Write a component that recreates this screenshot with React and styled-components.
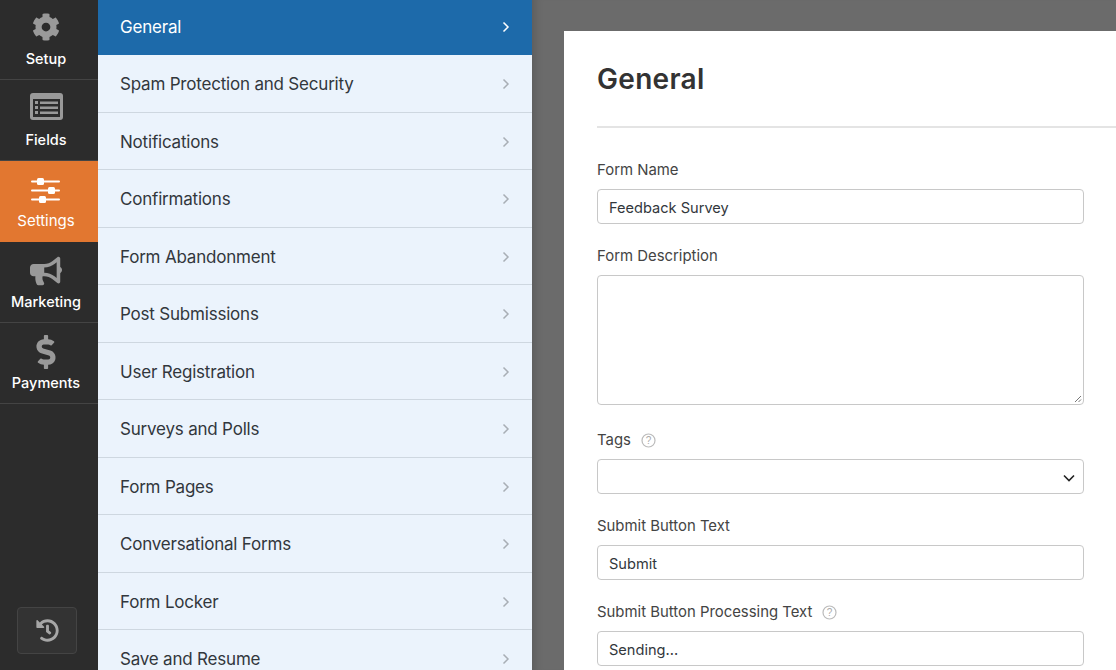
import styled, { createGlobalStyle } from 'styled-components';
import { FaCog, FaBullhorn, FaDollarSign, FaHistory } from 'react-icons/fa';

const GlobalStyle = createGlobalStyle`
  html, body {
    margin: 0;
    padding: 0;
    height: 100%;
    overflow: hidden;
    background: #6b6b6b;
  }
  * {
    box-sizing: border-box;
  }
`;

const Page = styled.div`
  display: flex;
  width: 1116px;
  height: 670px;
  overflow: hidden;
  font-family: Inter, 'Liberation Sans', Arial, sans-serif;
`;

const Sidebar = styled.nav`
  width: 98px;
  flex-shrink: 0;
  background: #2c2c2c;
  display: flex;
  flex-direction: column;
`;

const SideItem = styled.div`
  height: ${(p) => (p.$first ? '80px' : '81px')};
  display: flex;
  flex-direction: column;
  align-items: center;
  justify-content: flex-end;
  padding: 0 6px 12px 0;
  gap: 6px;
  color: #fff;
  font-size: ${(p) => (p.$active ? '15px' : '14.5px')};
  font-weight: ${(p) => (p.$active ? 400 : 500)};
  line-height: 17px;
  background: ${(p) => (p.$active ? '#e27730' : 'transparent')};
  border-bottom: 1px solid ${(p) => (p.$active ? '#e27730' : '#444')};
`;

const IconSlot = styled.div`
  height: 32px;
  display: flex;
  align-items: center;
  justify-content: center;
  margin-bottom: ${(p) => p.$lift || 0}px;
  color: ${(p) => (p.$active ? '#fff' : '#999')};
`;

const HistoryButton = styled.div`
  margin: auto 21px 16px 17px;
  height: 47px;
  border: 1px solid #444;
  border-radius: 4px;
  background: #333;
  color: #a6a6a6;
  display: flex;
  align-items: center;
  justify-content: center;
`;

const SectionList = styled.div`
  width: 434px;
  flex-shrink: 0;
  background: #ebf3fc;
`;

const SectionRow = styled.div`
  height: ${(p) => (p.$active ? '55px' : '57.5px')};
  display: flex;
  align-items: center;
  justify-content: space-between;
  padding: ${(p) => (p.$active ? 0 : '2px')} 22px 0;
  font-size: 17px;
  letter-spacing: -0.2px;
  color: ${(p) => (p.$active ? '#fff' : '#32373c')};
  background: ${(p) => (p.$active ? '#1d6aaa' : 'transparent')};
  border-bottom: 1px solid ${(p) => (p.$active ? '#1d6aaa' : '#ced7e0')};
`;

const Main = styled.main`
  flex: 1;
  min-width: 0;
  padding: 31px 0 0 32px;
  background: #6b6b6b;
  box-shadow: inset 10px 0 10px -8px rgba(0, 0, 0, 0.16);
`;

const Panel = styled.div`
  background: #fff;
  height: 100%;
  padding: 0 32px 0 33px;
`;

const Title = styled.h1`
  margin: 0 -32px 0 0;
  height: 97px;
  padding-top: 29px;
  font-size: 28px;
  line-height: 38px;
  font-weight: 600;
  letter-spacing: 0.3px;
  color: #333;
  border-bottom: 2px solid #e4e4e4;
`;

const Form = styled.div`
  display: flex;
  flex-direction: column;
  padding-top: 32px;
`;

const Field = styled.div`
  display: flex;
  flex-direction: column;
  margin-bottom: ${(p) => p.$gap || 22}px;
`;

const Label = styled.label`
  display: flex;
  align-items: center;
  gap: 10px;
  height: 20px;
  margin-bottom: 9px;
  font-size: 14.9px;
  color: #444;
`;

const Input = styled.div`
  width: 487px;
  height: ${(p) => p.$h || 35}px;
  display: flex;
  align-items: center;
  justify-content: space-between;
  position: relative;
  padding: 2px 8px 0 11px;
  border: 1px solid #c8c8c8;
  border-radius: 4px;
  font-size: 14.6px;
  color: #32373c;
  background: #fff;
`;

const Grip = styled.svg`
  position: absolute;
  right: 1px;
  bottom: 1px;
`;

const sections = [
  'General',
  'Spam Protection and Security',
  'Notifications',
  'Confirmations',
  'Form Abandonment',
  'Post Submissions',
  'User Registration',
  'Surveys and Polls',
  'Form Pages',
  'Conversational Forms',
  'Form Locker',
  'Save and Resume',
];

const FieldsIcon = () => (
  <svg width="33" height="27" viewBox="0 0 33 27">
    <rect width="33" height="27" rx="3" fill="#999" />
    <rect x="3" y="6" width="27" height="18" fill="#2c2c2c" />
    <g fill="#999">
      <rect x="5" y="8" width="3" height="3" />
      <rect x="5" y="13" width="3" height="3" />
      <rect x="5" y="18" width="3" height="3" />
      <rect x="10" y="8.5" width="18" height="2.5" />
      <rect x="10" y="13.5" width="18" height="2.5" />
      <rect x="10" y="18.5" width="18" height="2.5" />
    </g>
  </svg>
);

const SlidersIcon = () => (
  <svg width="30" height="27" viewBox="0 0 30 27" fill="#fff">
    <rect y="3.5" width="29" height="2" rx="1" />
    <rect x="6" y="1" width="7" height="7" rx="1.5" />
    <rect y="12.5" width="29" height="2" rx="1" />
    <rect x="17" y="10" width="7" height="7" rx="1.5" />
    <rect y="21.5" width="29" height="2" rx="1" />
    <rect x="8" y="19" width="7" height="7" rx="1.5" />
  </svg>
);

const Chevron = ({ active }) => (
  <svg width="8" height="12" viewBox="0 0 8 12" fill="none" stroke={active ? '#fff' : '#a8aeb5'} strokeWidth="1.5">
    <path d="M1.5 1.5 6 6l-4.5 4.5" />
  </svg>
);

const Help = () => (
  <svg width="15" height="15" viewBox="0 0 15 15">
    <circle cx="7.5" cy="7.5" r="6.5" fill="none" stroke="#bbb" strokeWidth="1.2" />
    <text x="7.5" y="11" textAnchor="middle" fontSize="10" fill="#aaa" fontFamily="Liberation Sans">?</text>
  </svg>
);

export default function App() {
  return (
    <Page>
      <GlobalStyle />
      <Sidebar>
        <SideItem $first>
          <IconSlot $lift={1}><FaCog size={28} /></IconSlot>
          Setup
        </SideItem>
        <SideItem>
          <IconSlot $lift={3}><FieldsIcon /></IconSlot>
          Fields
        </SideItem>
        <SideItem $active>
          <IconSlot $active><SlidersIcon /></IconSlot>
          Settings
        </SideItem>
        <SideItem>
          <IconSlot><FaBullhorn size={32} /></IconSlot>
          Marketing
        </SideItem>
        <SideItem>
          <IconSlot><FaDollarSign size={34} /></IconSlot>
          Payments
        </SideItem>
        <HistoryButton><FaHistory size={23} /></HistoryButton>
      </Sidebar>
      <SectionList>
        {sections.map((name, index) => (
          <SectionRow key={name} $active={index === 0}>
            {name}
            <Chevron active={index === 0} />
          </SectionRow>
        ))}
      </SectionList>
      <Main>
        <Panel>
          <Title>General</Title>
          <Form>
            <Field>
              <Label>Form Name</Label>
              <Input>Feedback Survey</Input>
            </Field>
            <Field $gap={25}>
              <Label>Form Description</Label>
              <Input $h={130}>
                <Grip width="8" height="8" viewBox="0 0 8 8" stroke="#777">
                  <path d="M1 7 7 1M4.5 7 7 4.5" />
                </Grip>
              </Input>
            </Field>
            <Field>
              <Label>Tags <Help /></Label>
              <Input>
                <span />
                <svg width="12" height="8" viewBox="0 0 12 8" fill="none" stroke="#222" strokeWidth="1.6">
                  <path d="M1 1.5 6 6.5l5-5" />
                </svg>
              </Input>
            </Field>
            <Field>
              <Label>Submit Button Text</Label>
              <Input>Submit</Input>
            </Field>
            <Field>
              <Label>Submit Button Processing Text <Help /></Label>
              <Input>Sending...</Input>
            </Field>
          </Form>
        </Panel>
      </Main>
    </Page>
  );
}
